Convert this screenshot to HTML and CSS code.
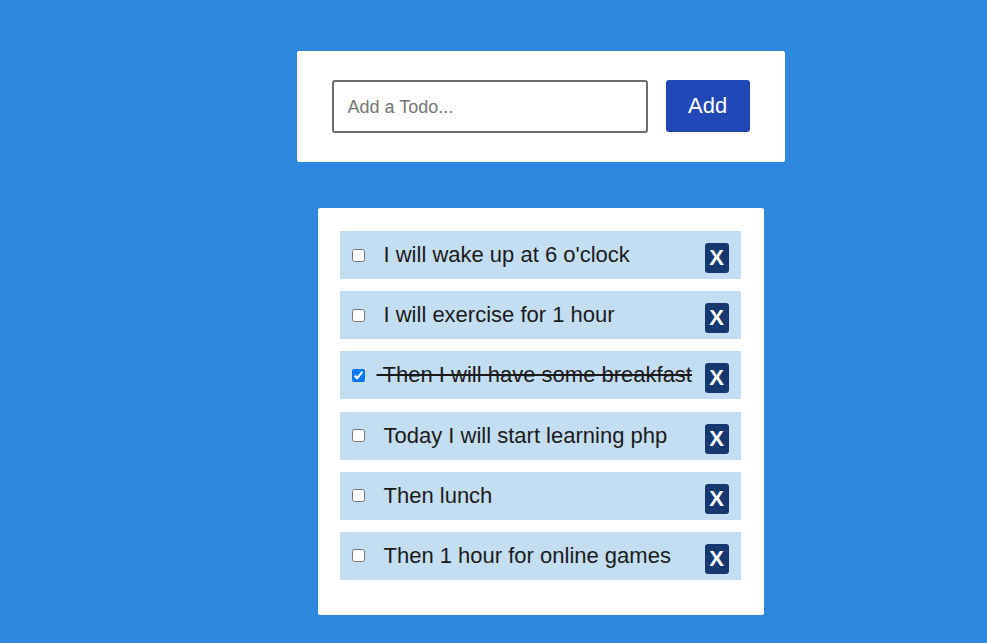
FILE: index.html
```html
<!DOCTYPE html>
<html>
<head>
<meta charset="utf-8">
<link rel="stylesheet" href="styles.css">
</head>
<body>
<div class="page">
  <form class="add-box">
    <input class="todo-input" type="text" placeholder="Add a Todo...">
    <button class="add-btn" type="button">Add</button>
  </form>
  <ul class="todo-list">
    <li class="todo"><input type="checkbox" class="chk"><span class="txt">I will wake up at 6 o'clock</span><button class="del" type="button">X</button></li>
    <li class="todo"><input type="checkbox" class="chk"><span class="txt">I will exercise for 1 hour</span><button class="del" type="button">X</button></li>
    <li class="todo done"><input type="checkbox" class="chk" checked><span class="txt">&nbsp;Then I will have some breakfast</span><button class="del" type="button">X</button></li>
    <li class="todo"><input type="checkbox" class="chk"><span class="txt">Today I will start learning php</span><button class="del" type="button">X</button></li>
    <li class="todo"><input type="checkbox" class="chk"><span class="txt">Then lunch</span><button class="del" type="button">X</button></li>
    <li class="todo"><input type="checkbox" class="chk"><span class="txt">Then 1 hour for online games</span><button class="del" type="button">X</button></li>
  </ul>
</div>
</body>
</html>
```
FILE: styles.css
```css
* { box-sizing: border-box; }
html, body { margin: 0; padding: 0; }
body {
  background: #2d87dd;
  font-family: "Liberation Sans", Arial, sans-serif;
  height: 643px;
  overflow: hidden;
}
.page {
  display: flex;
  flex-direction: column;
  align-items: center;
  padding-left: 94px;
  padding-top: 51px;
}
.add-box {
  margin: 0;
  background: #fff;
  width: 488px;
  height: 111px;
  padding: 29px 35px;
  display: flex;
  align-items: flex-start;
  gap: 18px;
  border-radius: 2px;
}
.todo-input {
  width: 317px;
  height: 53px;
  border: 2px solid #6b6b6b;
  border-radius: 3px;
  padding: 2px 14px 0 14px;
  font-family: "Liberation Sans", Arial, sans-serif;
  font-size: 18px;
  color: #333;
  outline: none;
}
.todo-input::placeholder { color: #757575; }
.add-btn {
  width: 84px;
  height: 52px;
  background: #2248b8;
  color: #fff;
  border: none;
  border-radius: 3px;
  font-family: "Liberation Sans", Arial, sans-serif;
  font-size: 22px;
  padding: 0;
}
.todo-list {
  list-style: none;
  margin: 46px 0 0 0;
  background: #fff;
  width: 446px;
  padding: 23px 23px 35px 22px;
  display: flex;
  flex-direction: column;
  gap: 12.2px;
  border-radius: 2px;
}
.todo {
  background: #c3ddf3;
  height: 48px;
  display: flex;
  align-items: center;
  padding: 0 12px 0 12px;
}
.chk {
  width: 13px;
  height: 13px;
  margin: 0;
  flex: none;
}
.txt {
  flex: 1;
  font-size: 22px;
  color: #1b1b1b;
  margin-left: 19px;
  white-space: nowrap;
}
.done .txt {
  text-decoration: line-through;
  margin-left: 12px;
}
.del {
  flex: none;
  width: 24px;
  height: 30px;
  background: #17376f;
  color: #fff;
  border: none;
  border-radius: 3px;
  font-family: "Liberation Sans", Arial, sans-serif;
  font-weight: bold;
  font-size: 22px;
  padding: 0;
  margin-top: 6px;
}
```
